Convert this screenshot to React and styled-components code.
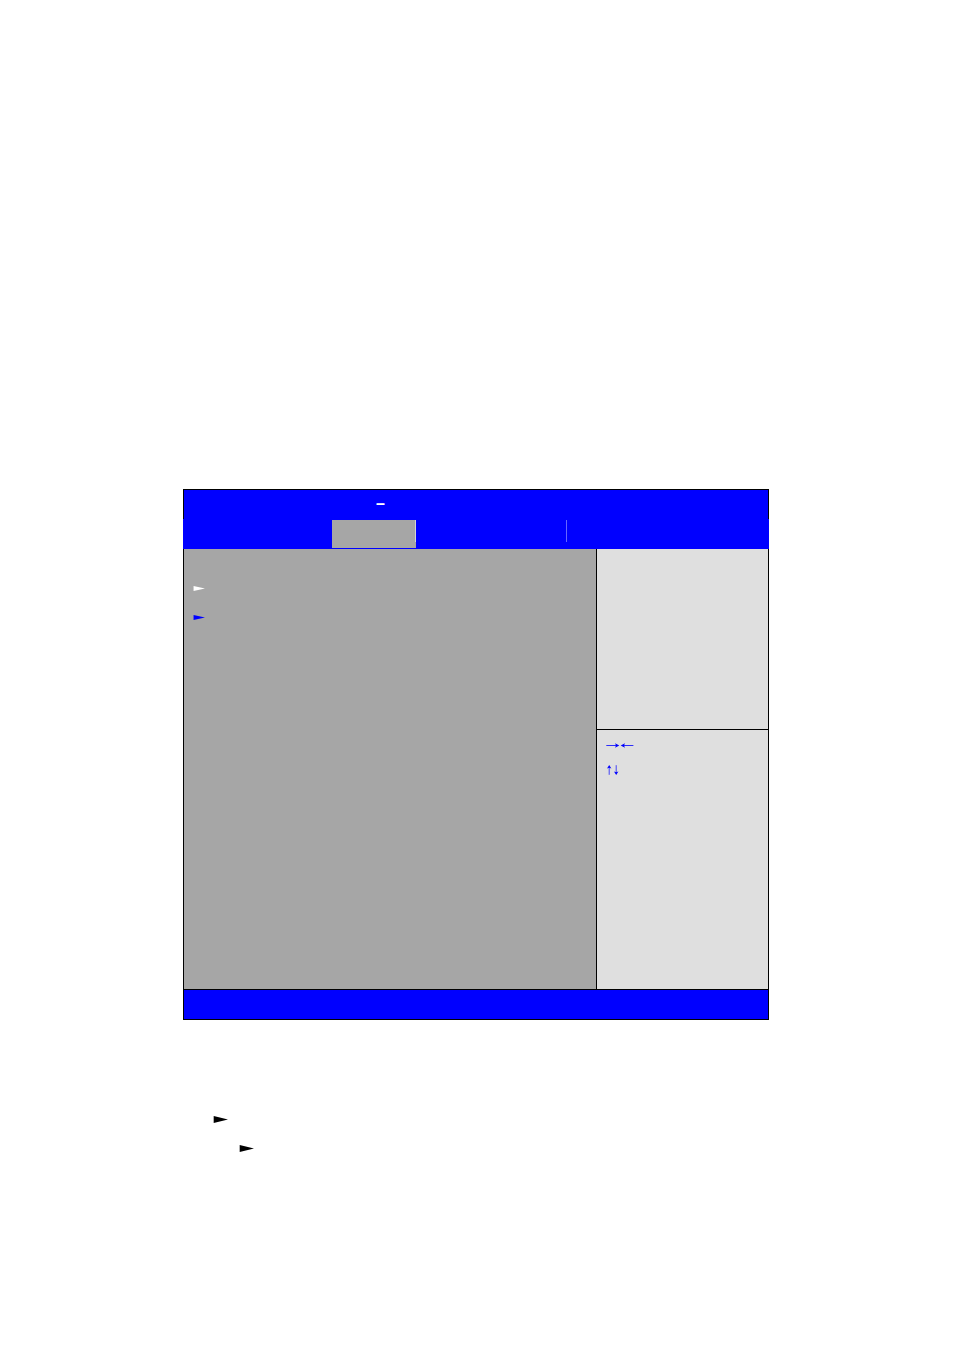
import React from 'react'
import styled, { createGlobalStyle } from 'styled-components'

const menuItems = [
    { id: 'first', color: '#fff' },
    { id: 'second', color: '#00f' },
]

const Marker = ({ width, height }) => (
    <svg width={width} height={height} viewBox="0 0 15 7" preserveAspectRatio="none" aria-hidden="true">
        <path d="M0.7 0.1 L15 3.5 L0.7 6.9 Z" fill="currentColor" />
    </svg>
)

const LeftRightArrows = () => (
    <svg width="28" height="6" viewBox="0 0 28 6" role="img" aria-label="Left and right arrow keys">
        <path d="M0.3 2.5 H11 M17 2.5 H27.4" stroke="currentColor" strokeWidth="0.8" />
        <path d="M13.3 2.5 L9 0.2 L10 2.5 L9 4.8 Z M14.7 2.5 L19 0.2 L18 2.5 L19 4.8 Z" fill="currentColor" />
    </svg>
)

const UpDownArrows = () => (
    <svg width="14" height="10" viewBox="0 0 14 10" role="img" aria-label="Up and down arrow keys">
        <path d="M3.2 2 V9.8 M10.2 0.2 V8" stroke="currentColor" strokeWidth="0.7" />
        <path d="M3.2 0 L1 3.6 L3.2 2.8 L5.4 3.6 Z M10.2 10 L8 6.4 L10.2 7.2 L12.4 6.4 Z" fill="currentColor" />
    </svg>
)

const App = () => {
    return (
        <Page>
            <GlobalStyle />
            <Screen>
                <TitleBar>–</TitleBar>
                <TabBar>
                    <Tab $width={149} aria-label="Previous menu" />
                    <Tab $width={84} $active aria-label="Current menu" />
                    <Tab $width={151} $divider aria-label="Next menu" />
                </TabBar>
                <Body>
                    <Menu>
                        {menuItems.map((item) => (
                            <MenuItem key={item.id} $color={item.color}>
                                <Marker width={12} height={5} />
                            </MenuItem>
                        ))}
                    </Menu>
                    <Side>
                        <Help />
                        <Keys>
                            <Key><LeftRightArrows /></Key>
                            <Key><UpDownArrows /></Key>
                        </Keys>
                    </Side>
                </Body>
                <Footer />
            </Screen>
            <Notes>
                <Note><Marker width={15} height={7} /></Note>
                <Note $indent><Marker width={15} height={7} /></Note>
            </Notes>
        </Page>
    )
}

export default App


const GlobalStyle = createGlobalStyle`
  * {
    box-sizing: border-box;
  }
  body {
    margin: 0;
    background: #fff;
    font-family: 'Liberation Sans', Arial, sans-serif;
  }
`

const Page = styled.main`
  padding: 489px 185px 180px 183px;
`

const Screen = styled.section`
  display: flex;
  flex-direction: column;
`

const TitleBar = styled.header`
  height: 30px;
  padding-right: 184px;
  padding-left: 192px;
  border: 1px solid #000;
  border-bottom: none;
  background: #00f;
  color: #fff;
  font-size: 16px;
  font-weight: bold;
  line-height: 28px;
`

const TabBar = styled.nav`
  display: flex;
  height: 30px;
  padding: 1px 0;
  background: #00f;
`

const Tab = styled.button`
  width: ${(props) => props.$width}px;
  height: 28px;
  padding: 0;
  border: none;
  background: ${(props) => (props.$active ? '#a6a6a6' : '#00f')};

  &::after {
    content: '';
    display: ${(props) => (props.$active || props.$divider ? 'block' : 'none')};
    width: 1px;
    height: 22px;
    margin: 0 0 6px auto;
    background: ${(props) => (props.$active ? '#d4d4d4' : '#6666ff')};
  }
`

const Body = styled.div`
  display: flex;
  min-height: 440px;
  border: solid #000;
  border-width: 0 1px;
`

const Menu = styled.ul`
  flex: 1;
  margin: 0;
  padding: 25px 9px;
  background: #a6a6a6;
  list-style: none;
`

const MenuItem = styled.li`
  display: flex;
  align-items: center;
  height: 29px;
  color: ${(props) => props.$color};
`

const Side = styled.aside`
  display: flex;
  flex-direction: column;
  width: 172px;
  border-left: 1px solid #000;
  background: #dfdfdf;
`

const Help = styled.div`
  height: 181px;
  border-bottom: 1px solid #000;
`

const Keys = styled.div`
  padding: 4px 9px;
`

const Key = styled.div`
  display: flex;
  align-items: center;
  height: 24px;
  color: #00f;
`

const Footer = styled.footer`
  height: 31px;
  border: 1px solid #000;
  background: #00f;
`

const Notes = styled.div`
  padding: 85px 30px 0;
`

const Note = styled.p`
  display: flex;
  align-items: center;
  height: 29px;
  margin: 0;
  padding-left: ${(props) => (props.$indent ? '26px' : '0')};
  color: #000;
`
